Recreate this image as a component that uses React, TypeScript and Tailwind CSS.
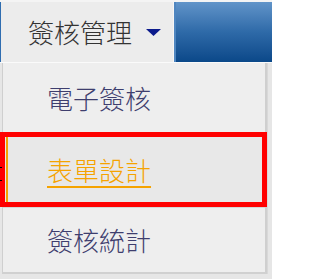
import React from "react";

const font = { fontFamily: '"Noto Sans CJK TC", "Noto Sans CJK SC", sans-serif' };

export default function App() {
  return (
    <div className="w-[272px] h-[279px] overflow-hidden bg-[#e6e6e6]" style={font}>
      {/* top bar */}
      <div className="border-t-2 border-[#f4f4f4] flex h-[62px]">
        <div className="w-px bg-[#2f6db0]" />
        <div className="w-[173px] bg-[#ececec] flex items-center pl-[27px] gap-[14px] border-r border-[#f6f6f6]">
          <span className="text-[26px] leading-none font-light text-[#333333]">簽核管理</span>
          <svg width="15" height="8" viewBox="0 0 15 8" className="mt-[2px]">
            <polygon points="0,0 15,0 7.5,7" fill="#0b1a8c" />
          </svg>
        </div>
        <div className="flex-1 bg-gradient-to-b from-[#6194c9] via-[#2e6aa8] to-[#0a4889] border-l-2 border-[#4f86c0]" />
      </div>
      <div className="h-px bg-[#fafafa]" />
      {/* dropdown */}
      <div className="flex">
        <div className="w-[2px]" />
        <div className="w-[265px] bg-[#eeeeee] border-l border-r-2 border-[#cfcfcf] border-b-2 border-b-[#d0d0d0]">
          <div className="h-[69px] flex items-center pl-[44px]">
            <span className="text-[26px] leading-none font-light text-[#3e3e6e]">電子簽核</span>
          </div>
          <div className="relative h-[75px] flex items-center pl-[44px] bg-[#e8e8e8]">
            <div className="absolute left-[3px] top-[5px] bottom-[5px] w-[2px] bg-[#f5a300]" />
            <span className="text-[26px] leading-none font-light text-[#f5a300] underline decoration-2 underline-offset-[5px]">表單設計</span>
            <div className="absolute -left-[3px] -right-[2px] top-0 bottom-0 border-[5px] border-[#ff0000]" />
            <div className="absolute -left-[3px] top-[35px] w-[2px] h-px bg-black" />
            <div className="absolute -left-[3px] top-[48px] w-[2px] h-px bg-black" />
          </div>
          <div className="h-[65px] flex items-center pl-[44px] border-t border-[#d6d6d6]">
            <span className="text-[26px] leading-none font-light text-[#3e3e6e]">簽核統計</span>
          </div>
        </div>
        <div className="flex-1 border-l border-[#d8d8d8]" />
      </div>
    </div>
  );
}
